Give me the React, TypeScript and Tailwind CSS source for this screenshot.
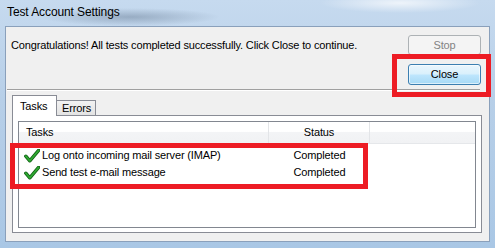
import React from 'react';

const font = "font-['Liberation_Sans',Arial,sans-serif]";

function Check() {
  return (
    <svg width="16" height="14" viewBox="0 0 16 14" className="shrink-0">
      <path d="M1.8 7.2 L5.8 11.8 L14.6 1.4" fill="none" stroke="#0f5f12" strokeWidth="3.4" strokeLinecap="round" strokeLinejoin="round" />
      <path d="M1.8 7.2 L5.8 11.8 L14.6 1.4" fill="none" stroke="#2fa832" strokeWidth="1.8" strokeLinecap="round" strokeLinejoin="round" />
    </svg>
  );
}

const rows = [
  { task: 'Log onto incoming mail server (IMAP)', status: 'Completed' },
  { task: 'Send test e-mail message', status: 'Completed' },
];

export default function App() {
  return (
    <div className={`relative w-[495px] h-[248px] overflow-hidden bg-[linear-gradient(180deg,#c6daef_0%,#b7cfe8_40%,#a9c7e5_100%)] ${font}`}>
      {/* blurred glass behind the caption */}
      <div className="absolute inset-x-0 top-0 h-[26px] bg-[radial-gradient(ellipse_90px_9px_at_130px_17px,rgba(70,90,115,0.35),transparent)]" />
      <div className="absolute inset-x-0 top-0 h-[26px] bg-[radial-gradient(ellipse_80px_10px_at_400px_3px,rgba(255,255,255,0.7),transparent)]" />

      {/* caption */}
      <div className="relative h-[26px] pl-[7px] pt-[4px] text-[12px] leading-[16px] tracking-[-0.1px] text-black">
        Test Account Settings
      </div>

      {/* client area */}
      <div className="relative mx-[5px] h-[216px] border border-[#8aa0bb] bg-[#f0f0f0] flex flex-col text-[11px] tracking-[-0.15px] text-black">
        <div className="flex h-[62px] justify-between">
          <div className="pl-[5px] pt-[11px] leading-[15px]">
            Congratulations! All tests completed successfully. Click Close to continue.
          </div>
          <div className="mr-[8px] pt-[8px] flex flex-col gap-[9px] w-[73px]">
            <div className="h-[20px] rounded-[3px] border border-[#adb2b5] bg-[#f4f4f4] flex items-center justify-center text-[#838383]">
              Stop
            </div>
            <div className="h-[21px] rounded-[3px] border border-[#3c7fb1] bg-[linear-gradient(180deg,#eaf6fd_0%,#d9f0fc_48%,#bee6fd_52%,#a7d9f5_100%)] shadow-[inset_0_0_0_1px_rgba(255,255,255,0.6)] flex items-center justify-center">
              Close
            </div>
          </div>
        </div>

        <div className="ml-[1px] mr-[9px] h-px bg-[#a0a0a0]" />
        <div className="ml-[1px] mr-[9px] h-px bg-white" />

        {/* tab control */}
        <div className="ml-[6px] mr-[7px] mt-[4px] flex flex-col">
          <div className="relative z-10 flex items-end h-[21px]">
            <div className="h-[21px] w-[45px] border border-b-0 border-[#898c95] bg-white pl-[7px] pt-[3px] leading-[14px]">
              Tasks
            </div>
            <div className="mb-px h-[15px] w-[39px] border border-l-0 border-b-0 border-[#898c95] bg-[linear-gradient(180deg,#f2f2f2,#e3e3e3)] pl-[5px] leading-[14px]">
              Errors
            </div>
          </div>
          <div className="-mt-px border border-[#898c95] bg-white p-[5px] pb-[4px]">
            <div className="h-[107px] border border-[#828790] bg-white">
              <div className="flex h-[22px] border-b border-[#e5e7ea] bg-[linear-gradient(180deg,#ffffff_0%,#ffffff_45%,#f3f4f6_50%,#f1f2f4_100%)]">
                <div className="w-[250px] border-r border-[#e3e5e8] pl-[7px] flex items-center">Tasks</div>
                <div className="w-[101px] border-r border-[#e3e5e8] flex items-center justify-center">Status</div>
                <div className="flex-1" />
              </div>
              <div className="pt-[3px]">
                {rows.map((r) => (
                  <div key={r.task} className="flex h-[17px] items-center">
                    <div className="w-[250px] pl-[5px] flex items-center gap-[2px]">
                      <Check />
                      <span>{r.task}</span>
                    </div>
                    <div className="w-[101px] text-center">{r.status}</div>
                  </div>
                ))}
              </div>
            </div>
          </div>
        </div>
      </div>

      {/* annotation boxes */}
      <div className="absolute left-[392px] top-[54px] w-[99px] h-[43px] border-[5px] border-[#ed1c24]" />
      <div className="absolute left-[10px] top-[143px] w-[358px] h-[46px] border-[5px] border-[#ed1c24]" />
    </div>
  );
}
